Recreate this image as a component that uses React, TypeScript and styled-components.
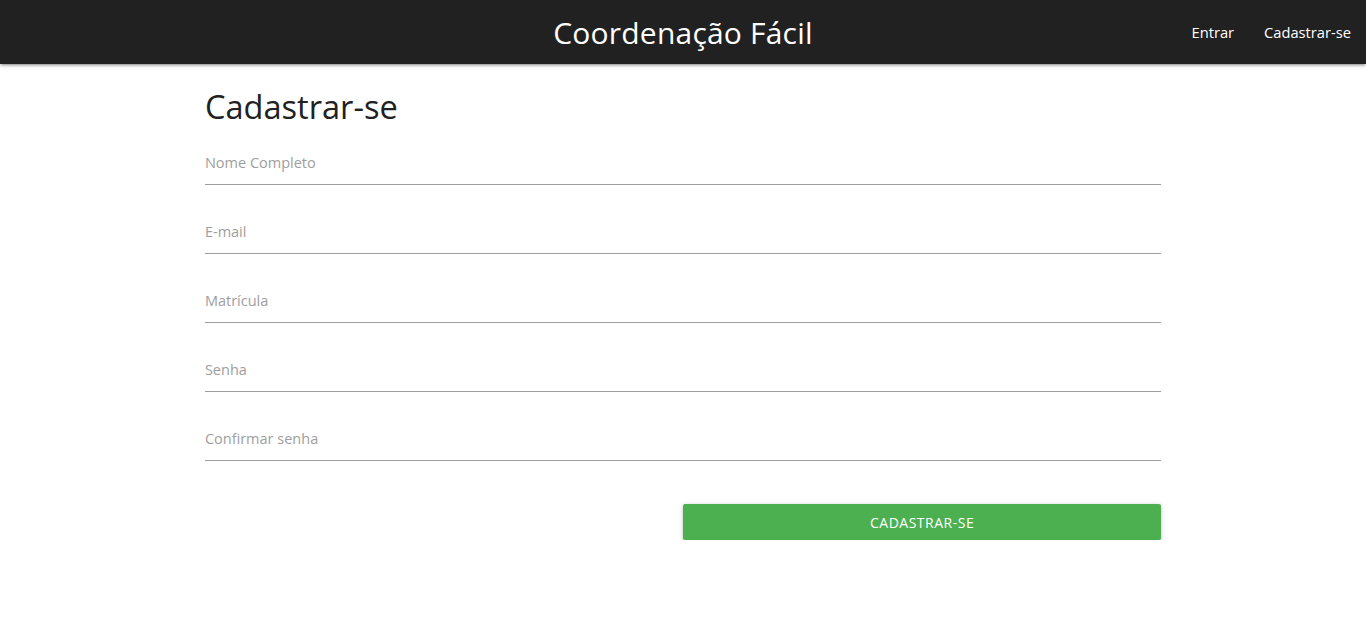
import React from "react";
import styled, { createGlobalStyle } from "styled-components";

const Global = createGlobalStyle`
  html { font-size: 15px; }
  body { margin: 0; font-family: "Open Sans", "Noto Sans", sans-serif; color: rgba(0,0,0,0.87); background: #fff; }
  * { box-sizing: border-box; }
`;

const Nav = styled.nav`
  height: 64px;
  background: #212121;
  color: #fff;
  display: flex;
  align-items: center;
  position: relative;
  box-shadow: 0 2px 2px 0 rgba(0,0,0,0.14), 0 3px 1px -2px rgba(0,0,0,0.12), 0 1px 5px 0 rgba(0,0,0,0.2);
`;

const Brand = styled.a`
  position: absolute;
  left: 50%;
  transform: translateX(-50%);
  font-size: 30px;
  letter-spacing: 0.2px;
  color: #fff;
  text-decoration: none;
  white-space: nowrap;
`;

const Links = styled.ul`
  margin: 0 0 0 auto;
  padding: 0;
  list-style: none;
  display: flex;
`;

const NavLink = styled.a`
  display: block;
  padding: 0 15px;
  line-height: 64px;
  font-size: 14.7px;
  color: #fff;
  text-decoration: none;
`;

const Container = styled.main`
  width: 70%;
  margin: 0 auto;
`;

const Title = styled.h4`
  font-size: 32.6px;
  font-weight: 400;
  line-height: 37px;
  margin: 24px 0 14px;
  color: #212121;
`;

const Form = styled.form`
  display: flex;
  flex-direction: column;
  gap: 23px;
`;

const Input = styled.input`
  display: block;
  width: 100%;
  height: 46px;
  border: none;
  border-bottom: 1px solid #9e9e9e;
  background: transparent;
  outline: none;
  padding: 2px 0 0;
  font-family: inherit;
  font-size: 14.5px;
  color: #212121;
  &::placeholder { color: #9e9e9e; }
`;

const Actions = styled.div`
  display: flex;
  justify-content: flex-end;
  margin-top: 20px;
`;

const Button = styled.button`
  width: 478px;
  height: 36px;
  border: none;
  border-radius: 2px;
  background: #4caf50;
  color: #fff;
  font-family: inherit;
  font-size: 14px;
  letter-spacing: 0.5px;
  text-transform: uppercase;
  box-shadow: 0 2px 2px 0 rgba(0,0,0,0.14), 0 3px 1px -2px rgba(0,0,0,0.12), 0 1px 5px 0 rgba(0,0,0,0.2);
  cursor: pointer;
`;

const fields = ["Nome Completo", "E-mail", "Matrícula", "Senha", "Confirmar senha"];

export default function App() {
  return (
    <>
      <Global />
      <Nav>
        <Brand href="#">Coordenação Fácil</Brand>
        <Links>
          <li><NavLink href="#">Entrar</NavLink></li>
          <li><NavLink href="#">Cadastrar-se</NavLink></li>
        </Links>
      </Nav>
      <Container>
        <Title>Cadastrar-se</Title>
        <Form onSubmit={(e) => e.preventDefault()}>
          {fields.map((f) => (
            <Input key={f} placeholder={f} type={f.includes("enha") ? "password" : "text"} />
          ))}
          <Actions>
            <Button type="submit">Cadastrar-se</Button>
          </Actions>
        </Form>
      </Container>
    </>
  );
}
